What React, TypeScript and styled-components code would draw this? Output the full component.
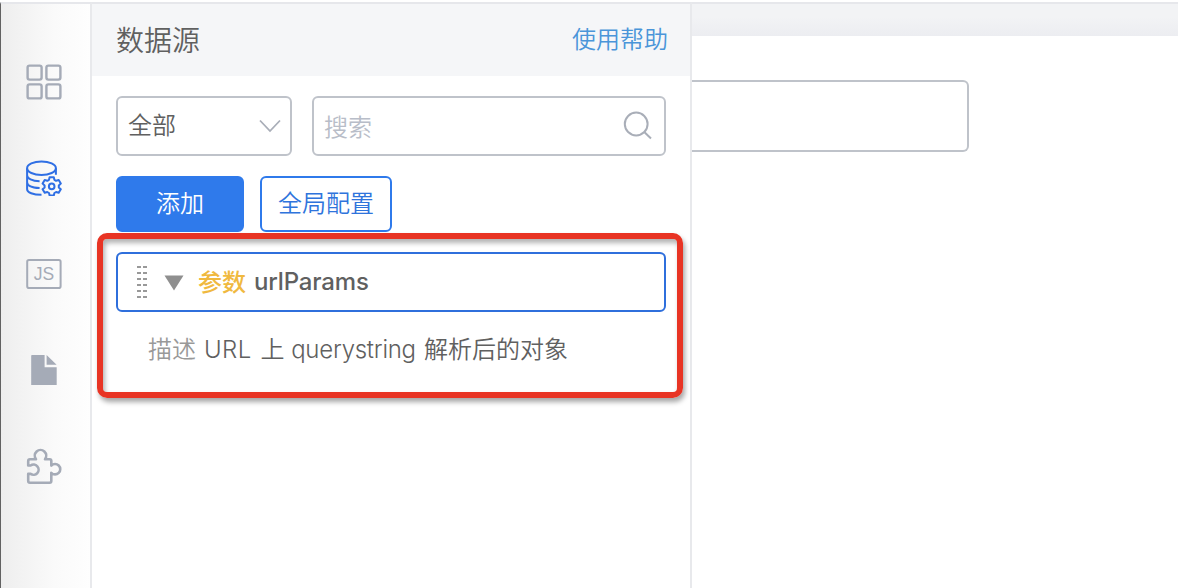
import styled, { createGlobalStyle } from 'styled-components';

const GlobalStyle = createGlobalStyle`
  * {
    box-sizing: border-box;
  }
  body {
    margin: 0;
    background-color: #fff;
    font-family: Inter, 'Noto Sans CJK SC', sans-serif;
    font-size: 24px;
    color: #606060;
  }
`;

const Page = styled.div`
  display: flex;
  height: 588px;
  padding-top: 2px;
  overflow: hidden;
`;

const Sidebar = styled.nav`
  width: 92px;
  flex: none;
  display: flex;
  flex-direction: column;
  align-items: center;
  padding: 32px 4px 0 0;
  border-top: 2px solid #e6e7eb;
  border-left: 1px solid #626262;
  border-right: 2px solid #e8e9ec;
  background: linear-gradient(to right, #eeeeee, #fafafa 60%, #fefefe);
`;

const NavItem = styled.a<{ $active?: boolean }>`
  width: 40px;
  height: 96px;
  display: flex;
  justify-content: center;
  align-items: flex-start;
  padding-top: 28px;
  color: ${(props) => (props.$active ? '#2f6fe4' : '#a5abb7')};
  svg {
    display: block;
  }
`;

const Panel = styled.section`
  width: 600px;
  flex: none;
  border-top: 2px solid #e6e7eb;
  border-right: 2px solid #e8e9ec;
`;

const PanelHeader = styled.header`
  height: 72px;
  padding: 0 22px 0 24px;
  display: flex;
  justify-content: space-between;
  align-items: center;
  background-color: #f5f6f8;
`;

const Title = styled.h1`
  margin: 0;
  padding-top: 2px;
  font-size: 28px;
  font-weight: 350;
  line-height: 40px;
`;

const HelpLink = styled.a`
  font-weight: 350;
  line-height: 40px;
  color: #4a95d9;
`;

const PanelBody = styled.div`
  padding: 20px 24px 0;
`;

const Row = styled.div<{ $gap: number }>`
  display: flex;
  gap: ${(props) => props.$gap}px;
  margin-bottom: 20px;
`;

const Field = styled.div<{ $width: number }>`
  width: ${(props) => props.$width}px;
  height: 60px;
  display: flex;
  justify-content: space-between;
  align-items: center;
  padding: 0 9px 0 10px;
  border: 2px solid #bfc3ca;
  border-radius: 6px;
  font-weight: 350;
`;

const FieldText = styled.span`
  padding-bottom: 5px;
`;

const Placeholder = styled.span`
  padding-bottom: 2px;
  color: #b8bdc8;
`;

const SearchIcon = styled.svg`
  margin: 0 2px 2px 0;
`;

const Button = styled.button<{ $primary?: boolean }>`
  width: ${(props) => (props.$primary ? 128 : 132)}px;
  height: 56px;
  padding: 0 0 5px;
  border: 2px solid #2f7aeb;
  border-radius: 6px;
  background-color: ${(props) => (props.$primary ? '#2f7aeb' : '#fff')};
  color: ${(props) => (props.$primary ? '#fff' : '#2f74dc')};
  font: inherit;
  font-weight: 350;
`;

const Source = styled.div`
  position: relative;
`;

const Highlight = styled.div`
  position: absolute;
  top: -19px;
  left: -19px;
  width: 586px;
  height: 165px;
  border: 6px solid #e83424;
  border-radius: 10px;
  box-shadow: 2px 4px 5px rgba(0, 0, 0, 0.35),
    inset 2px 4px 5px rgba(0, 0, 0, 0.3);
  pointer-events: none;
`;

const SourceHeader = styled.div`
  height: 60px;
  display: flex;
  align-items: center;
  padding-left: 18px;
  border: 2px solid #2f6fdc;
  border-radius: 6px;
`;

const Toggle = styled.svg`
  margin: 2px 14px 0 16px;
`;

const Kind = styled.span`
  margin-right: 8px;
  padding-bottom: 4px;
  font-weight: 500;
  color: #f0b93f;
`;

const Name = styled.span`
  padding-bottom: 2px;
  font-weight: 550;
  letter-spacing: -0.15px;
`;

const Description = styled.p`
  margin: 0;
  padding: 20px 0 0 32px;
  line-height: 36px;
  font-weight: 350;
  white-space: nowrap;
`;

const Label = styled.span`
  margin-right: 8px;
  color: #999;
`;

const Latin = styled.span<{ $spacing: number; $gap: number }>`
  margin-right: ${(props) => props.$gap}px;
  letter-spacing: ${(props) => props.$spacing}px;
`;

const Canvas = styled.main`
  flex: 1;
  border-top: 2px solid #e6e7eb;
`;

const CanvasBar = styled.div`
  height: 32px;
  background: linear-gradient(#f2f3f5 40%, #ecedf1);
`;

const CanvasInput = styled.div`
  width: 277px;
  height: 72px;
  margin-top: 44px;
  border: 2px solid #bfc3ca;
  border-left: 0;
  border-radius: 0 6px 6px 0;
`;

const GridIcon = () => (
  <svg width="36" height="36" fill="none" stroke="currentColor" strokeWidth="2.4">
    <rect x="1.6" y="1.6" width="14" height="14" rx="2" />
    <rect x="20.4" y="1.6" width="14" height="14" rx="2" />
    <rect x="1.6" y="20.4" width="14" height="14" rx="2" />
    <rect x="20.4" y="20.4" width="14" height="14" rx="2" />
  </svg>
);

const DatabaseIcon = () => (
  <svg width="36" height="36" fill="none" stroke="currentColor" strokeWidth="2">
    <ellipse cx="15.5" cy="8.2" rx="14.4" ry="6.8" />
    <path d="M1.1 8.2v21c0 3.2 6 5.6 14.4 5.6M29.9 8.2v6.6M1.1 15.2c0 3.2 5 5.7 12.5 6M1.1 22.2c0 3.2 5 5.5 12.5 5.9" />
    <path
      d="M23.6 17.2h4.2l.6 2.6 1.7 1 2.6-.8 2.1 3.6-2 1.8v2l2 1.8-2.1 3.6-2.6-.8-1.7 1-.6 2.5h-4.2l-.6-2.5-1.7-1-2.6.8-2.1-3.6 2-1.8v-2l-2-1.8 2.1-3.6 2.6.8 1.7-1z"
      strokeLinejoin="round"
    />
    <circle cx="25.7" cy="26.4" r="2.8" />
  </svg>
);

const JsIcon = () => (
  <svg width="36" height="36" fill="none" stroke="currentColor" strokeWidth="2">
    <rect x="1.2" y="4" width="33.4" height="28" rx="1.8" />
    <text
      x="18"
      y="24.2"
      textAnchor="middle"
      fill="currentColor"
      stroke="none"
      fontFamily="Liberation Sans, sans-serif"
      fontSize="17.5"
    >
      JS
    </text>
  </svg>
);

const FileIcon = () => (
  <svg width="36" height="36" fill="currentColor">
    <path d="M6 3h12.6v12.2H30.7V32.9H5.2V3.8q0-.8.8-.8zM20.6 3l10 9.7H20.6z" />
  </svg>
);

const PuzzleIcon = () => (
  <svg width="36" height="37" fill="none" stroke="currentColor" strokeWidth="2.6" strokeLinejoin="round">
    <path d="M3.9 11.2h6.1a5.7 5.7 0 1 1 9 0h4.7q1.6 0 1.6 1.6v4.8a5.2 5.2 0 1 1 0 7.2v8.3q0 1.7-1.7 1.7H3.9q-1.7 0-1.7-1.7v-7.2h2.4a5.1 5.1 0 1 0 0-8.4H2.2v-4.6q0-1.7 1.7-1.7z" />
  </svg>
);

const handleRows = [0, 6, 12, 18, 24, 30];

function App() {
  return (
    <>
      <GlobalStyle />
      <Page>
        <Sidebar>
          <NavItem>
            <GridIcon />
          </NavItem>
          <NavItem $active>
            <DatabaseIcon />
          </NavItem>
          <NavItem>
            <JsIcon />
          </NavItem>
          <NavItem>
            <FileIcon />
          </NavItem>
          <NavItem>
            <PuzzleIcon />
          </NavItem>
        </Sidebar>

        {/* Data sources */}
        <Panel>
          <PanelHeader>
            <Title>数据源</Title>
            <HelpLink>使用帮助</HelpLink>
          </PanelHeader>
          <PanelBody>
            <Row $gap={20}>
              <Field $width={176}>
                <FieldText>全部</FieldText>
                <svg width="22" height="14" fill="none" stroke="#a9aeb8" strokeWidth="1.8">
                  <path d="M1 1.5l10 10.5 10-10.5" />
                </svg>
              </Field>
              <Field $width={354}>
                <Placeholder>搜索</Placeholder>
                <SearchIcon width="30" height="30" fill="none" stroke="#a9aeb8" strokeWidth="2">
                  <circle cx="13.2" cy="14" r="11.4" />
                  <path d="M21 21.7l7 6.8" />
                </SearchIcon>
              </Field>
            </Row>
            <Row $gap={16}>
              <Button $primary>添加</Button>
              <Button>全局配置</Button>
            </Row>
            <Source>
              <SourceHeader>
                <svg width="12" height="32" fill="#999">
                  {handleRows.map((y) => (
                    <path key={y} d={`M1 ${y}h4v2H1zM7 ${y}h4v2H7z`} />
                  ))}
                </svg>
                <Toggle width="20" height="16" fill="#8f8f8f">
                  <path d="M.5.5h19L10 15.5z" />
                </Toggle>
                <Kind>参数</Kind>
                <Name>urlParams</Name>
              </SourceHeader>
              <Description>
                <Label>描述</Label>
                <Latin $spacing={0.4} $gap={2}>URL</Latin> 上{' '}
                <Latin $spacing={-0.25} $gap={1.5}>querystring</Latin> 解析后的对象
              </Description>
              <Highlight />
            </Source>
          </PanelBody>
        </Panel>

        <Canvas>
          <CanvasBar />
          <CanvasInput />
        </Canvas>
      </Page>
    </>
  );
}

export default App;
